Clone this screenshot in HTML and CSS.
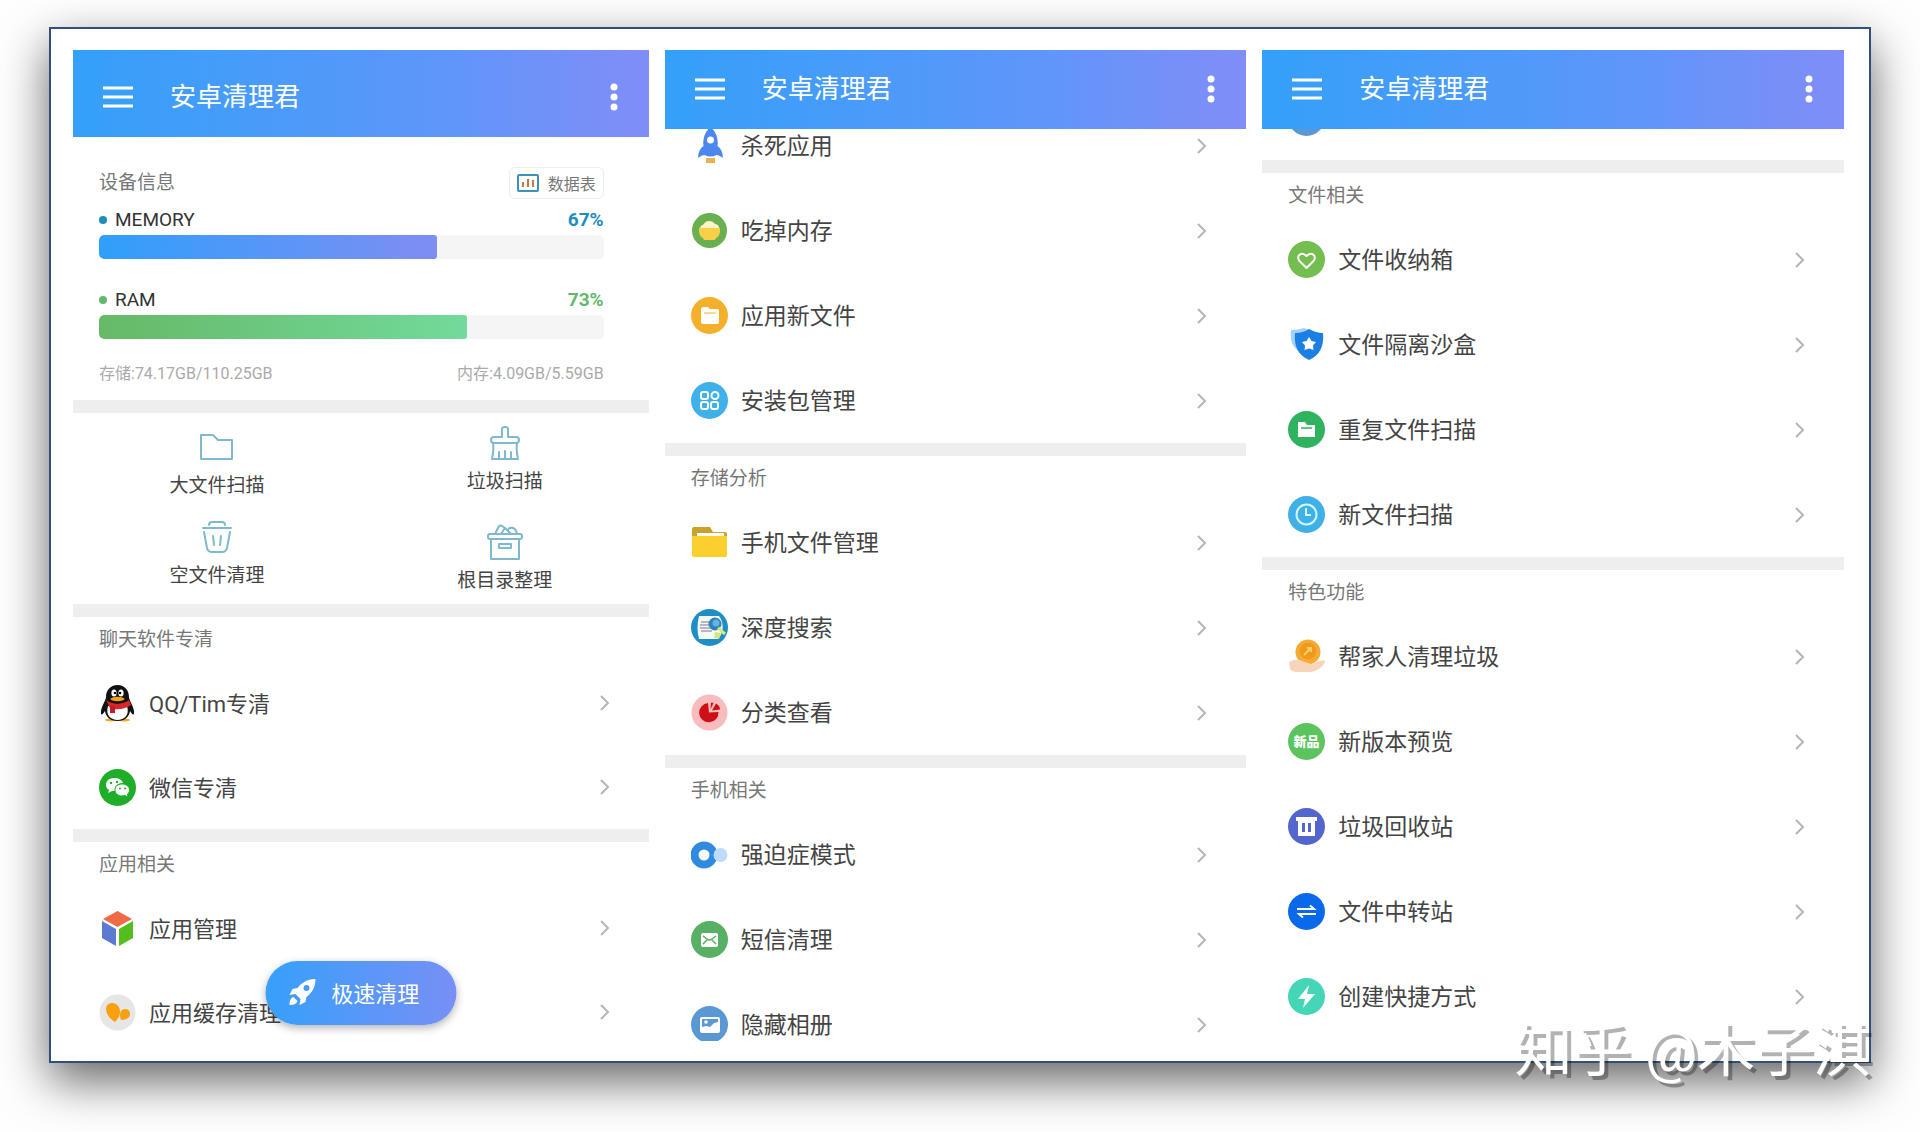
FILE: index.html
```html
<!DOCTYPE html>
<html lang="zh-CN">
  <head>
    <meta charset="UTF-8" />
    <meta name="viewport" content="width=device-width, initial-scale=1.0" />
    <title>安卓清理君</title>
    <link rel="stylesheet" href="styles.css">
  </head>
  <body>
    <main class="board">
      <!-- Home -->
      <section class="screen home">
        <header class="appbar">
          <button class="menu-btn" type="button" aria-label="菜单">
            <svg width="30" height="22" viewBox="0 0 30 22"><path d="M0 2h30M0 11h30M0 20h30" stroke="#fff" stroke-width="3" /></svg>
          </button>
          <h1>安卓清理君</h1>
          <button class="more-btn" type="button" aria-label="更多">
            <svg width="8" height="28" viewBox="0 0 8 28" fill="#fff"><circle cx="4" cy="4" r="3.5" /><circle cx="4" cy="14" r="3.5" /><circle cx="4" cy="24" r="3.5" /></svg>
          </button>
        </header>
        <div class="content">
          <div class="device">
            <div class="device-head">
              <h2>设备信息</h2>
              <button class="data-btn" type="button">
                <svg width="22" height="18" viewBox="0 0 22 18" fill="none"><rect x="1" y="1" width="20" height="16" rx="1" stroke="#3b93bd" stroke-width="2" /><path d="M6 8v5M11 5v8M16 6v7" stroke="#c9793f" stroke-width="2" /></svg>
                数据表
              </button>
            </div>
            <div class="meter memory">
              <div class="meter-label"><i class="dot"></i><span>MEMORY</span><b>67%</b></div>
              <div class="bar"><div class="fill" style="width: 67%"></div></div>
            </div>
            <div class="meter ram">
              <div class="meter-label"><i class="dot"></i><span>RAM</span><b>73%</b></div>
              <div class="bar"><div class="fill" style="width: 73%"></div></div>
            </div>
            <div class="usage"><span>存储:74.17GB/110.25GB</span><span>内存:4.09GB/5.59GB</span></div>
          </div>

          <div class="tools">
            <div class="tools-col">
              <a class="tool" href="#">
                <svg width="36" height="36" viewBox="0 0 36 36"><path d="M2 30V6h12l5 5h14v19z" /></svg>
                大文件扫描
              </a>
              <a class="tool" href="#">
                <svg width="36" height="36" viewBox="0 0 36 36"><path d="M10 6q0-3 3-3h10q3 0 3 3M4 9h28M5 13l3 16q1 4 5 4h10q4 0 5-4l3-16M14 17l1 9M22 17l-1 9" /></svg>
                空文件清理
              </a>
            </div>
            <div class="tools-col wide">
              <a class="tool" href="#">
                <svg width="36" height="36" viewBox="0 0 36 36"><path d="M15 12V4q0-2 3-2t3 2v8h8q3 0 3 3t-3 3H7q-3 0-3-3t3-3zM6 18q1 8-1 16h26q-2-8-1-16M12 34v-7M18 34v-8M24 34v-7" /></svg>
                垃圾扫描
              </a>
              <a class="tool" href="#">
                <svg width="36" height="36" viewBox="0 0 36 36"><path d="M3 10h30q2 0 2 2v1q0 2-2 2H3q-2 0-2-2v-1q0-2 2-2zM4 15v20h28V15M12 20h12v4H12zM8 10l4-8q1-1 3 0l3 2-4 6M18 4l6 6M21 6q1-3 5-2 3 1 4 6" /></svg>
                根目录整理
              </a>
            </div>
          </div>

          <section class="group">
            <h2>聊天软件专清</h2>
            <a class="row" href="#">
              <svg class="icon" viewBox="0 0 37 37"><ellipse cx="12" cy="35" rx="6" ry="1.500" fill="#f5a623" /><ellipse cx="25" cy="35" rx="6" ry="1.500" fill="#f5a623" /><path d="M18.500 0C11 0 7 6 7 12c0 3-4 8-5 14-.500 4 1 5 4 0 1 6 5 10 12.500 10S30 32 31 26c3 5 4.500 4 4 0-1-6-5-11-5-14 0-6-4-12-11.500-12z" fill="#111" /><path d="M9 21h19c3 9-3 14-9.500 14S6 30 9 21z" fill="#fff" /><path d="M7 15c7 5 16 5 23 0l2 5c-7 5-16 5-21 3z" fill="#d9252c" /><path d="M11 20l5 1v7h-5z" fill="#c41d25" /><ellipse cx="15" cy="8" rx="2.600" ry="3.500" fill="#fff" /><ellipse cx="22" cy="8" rx="2.600" ry="3.500" fill="#fff" /><circle cx="16" cy="8" r="1.300" /><circle cx="21" cy="8" r="1.300" /><ellipse cx="18.500" cy="14" rx="7" ry="2.200" fill="#f7a01d" /></svg>
              <span>QQ/Tim专清</span><svg class="arrow" viewBox="0 0 10 16"><path d="M1 1l7 7-7 7" /></svg>
            </a>
            <a class="row" href="#">
              <svg class="icon" viewBox="0 0 37 37"><circle cx="18.500" cy="18.500" r="18.500" fill="#1fae28" /><path d="M15 9c-5 0-8 3-8 7 0 2 1 4 3 5l-1 3 4-2h3c-1-5 3-8 8-8-1-3-4-5-9-5z" fill="#fff" /><path d="M23 15c-4 0-7 2.500-7 6s3 6 7 6l3-.500 3 1.500-.500-3c1.500-1 2-2.500 2-4 0-3.500-3.500-6-7.500-6z" fill="#fff" stroke="#1fae28" /><g fill="#1fae28"><circle cx="12" cy="14" r="1.200" /><circle cx="18" cy="13" r="1.200" /><circle cx="21" cy="19.500" r="1" /><circle cx="26" cy="19.500" r="1" /></g></svg>
              <span>微信专清</span><svg class="arrow" viewBox="0 0 10 16"><path d="M1 1l7 7-7 7" /></svg>
            </a>
          </section>

          <section class="group">
            <h2>应用相关</h2>
            <a class="row" href="#">
              <svg class="icon" viewBox="0 0 37 37"><path d="M18.500 1L33 9l-14.500 8L4 9z" fill="#ef6a45" /><path d="M3 11l14 8v17L3 28z" fill="#5d7ad2" /><path d="M34 11l-14 8v17l14-8z" fill="#56bd1f" /></svg>
              <span>应用管理</span><svg class="arrow" viewBox="0 0 10 16"><path d="M1 1l7 7-7 7" /></svg>
            </a>
            <a class="row" href="#">
              <svg class="icon" viewBox="0 0 37 37"><circle cx="18.500" cy="18.500" r="18" fill="#e7e6e6" /><path d="M16 28C11 25 7 20 7 15c0-4 3-6 6-6 5 0 8 4 8 9 0 4-2 7-5 10z" fill="#f8a010" /><path d="M22 26c-2-5-1-11 4-11 3 0 5 2 5 5 0 4-4 6-9 6z" fill="#f8a010" /></svg>
              <span>应用缓存清理</span><svg class="arrow" viewBox="0 0 10 16"><path d="M1 1l7 7-7 7" /></svg>
            </a>
          </section>
        </div>

        <button class="fab" type="button">
          <svg width="28" height="28" viewBox="0 0 28 28"><path fill="#fff" fill-rule="evenodd" d="M27 1C18 1 13 5 9 10L4 11 1 17l6-1 5 5-1 6 6-3 1-5c5-4 9-9 9-18zM18 7a3 3 0 1 1 0 6 3 3 0 0 1 0-6zM5 19l4 4c-1 3-4 4-8 4 0-4 1-7 4-8z" /></svg>
          极速清理
        </button>
      </section>

      <!-- Apps and storage -->
      <section class="screen">
        <header class="appbar">
          <button class="menu-btn" type="button" aria-label="菜单">
            <svg width="30" height="22" viewBox="0 0 30 22"><path d="M0 2h30M0 11h30M0 20h30" stroke="#fff" stroke-width="3" /></svg>
          </button>
          <h1>安卓清理君</h1>
          <button class="more-btn" type="button" aria-label="更多">
            <svg width="8" height="28" viewBox="0 0 8 28" fill="#fff"><circle cx="4" cy="4" r="3.500" /><circle cx="4" cy="14" r="3.500" /><circle cx="4" cy="24" r="3.500" /></svg>
          </button>
        </header>
        <div class="content">
          <div class="scrolled-apps">
            <section class="group">
              <a class="row" href="#">
                <svg class="icon" viewBox="0 0 37 37"><path d="M19.500 0c6 5 8 12 7 19 4 3 6 8 5 12-2-2-4-3-6-3-4 2-8 2-12 0-2 0-4 1-6 3-1-4 1-9 5-12-1-7 1-14 7-19z" fill="#4b88ee" /><circle cx="19.500" cy="13" r="3.500" fill="#fff" /><path d="M15 31h9v5h-9z" fill="#eab052" /></svg>
                <span>杀死应用</span><svg class="arrow" viewBox="0 0 10 16"><path d="M1 1l7 7-7 7" /></svg>
              </a>
              <a class="row" href="#">
                <svg class="icon" viewBox="0 0 37 37"><circle cx="18.500" cy="18.500" r="17.500" fill="#69b050" /><path d="M9 17c0-4 3-4 4-5 1-4 9-4 11 0 2 0 5 2 4 6z" fill="#fdf3c4" /><path d="M8 16h21v4q-1 5-4 6l-1 2H13l-1-2q-3-1-4-6z" fill="#f8cf48" /></svg>
                <span>吃掉内存</span><svg class="arrow" viewBox="0 0 10 16"><path d="M1 1l7 7-7 7" /></svg>
              </a>
              <a class="row" href="#">
                <svg class="icon" viewBox="0 0 37 37"><circle cx="18.500" cy="18.500" r="18.500" fill="#f4b02a" /><path d="M10 12q0-2 2-2h5l2 2h7q2 0 2 2v11q0 2-2 2H12q-2 0-2-2z" fill="#fff" /><path d="M13 16h12" stroke="#f4b02a" /></svg>
                <span>应用新文件</span><svg class="arrow" viewBox="0 0 10 16"><path d="M1 1l7 7-7 7" /></svg>
              </a>
              <a class="row" href="#">
                <svg class="icon" viewBox="0 0 37 37"><circle cx="18.500" cy="18.500" r="18.500" fill="#3fb1ea" /><g fill="none" stroke="#fff" stroke-width="2"><rect x="10" y="10" width="7" height="7" rx="2" /><circle cx="24" cy="13.500" r="3.500" /><rect x="10" y="20" width="7" height="7" rx="2" /><rect x="20" y="20" width="7" height="7" rx="2" /></g></svg>
                <span>安装包管理</span><svg class="arrow" viewBox="0 0 10 16"><path d="M1 1l7 7-7 7" /></svg>
              </a>
            </section>

            <section class="group">
              <h2>存储分析</h2>
              <a class="row" href="#">
                <svg class="icon" viewBox="0 0 37 37"><path d="M1 6q0-3 2-3h16l3 5h12q2 0 2 2v5H1z" fill="#c9a227" /><path d="M6 9h27v5H6z" fill="#fff" /><path d="M1 12h35v19q0 2-2 2H3q-2 0-2-2z" fill="#fbcf2e" /></svg>
                <span>手机文件管理</span><svg class="arrow" viewBox="0 0 10 16"><path d="M1 1l7 7-7 7" /></svg>
              </a>
              <a class="row" href="#">
                <svg class="icon" viewBox="0 0 37 37"><circle cx="18.500" cy="18.500" r="18.500" fill="#1d8fc6" /><path d="M8 7h20c5 6 5 17-1 23H8q-3-11 0-23z" fill="#f4faf0" /><path d="M10 13h9M9 16h9M9 19h10M10 22h11" stroke="#a59ec4" stroke-width="1.500" /><path d="M24 23l6 1-2 6-5-1z" fill="#d6e486" /><circle cx="24" cy="15" r="6.500" fill="#2a84bd" /><circle cx="25" cy="14" r="3.500" fill="#66b4dc" /><path d="M27 19l7 6" stroke="#dce978" stroke-width="3" /></svg>
                <span>深度搜索</span><svg class="arrow" viewBox="0 0 10 16"><path d="M1 1l7 7-7 7" /></svg>
              </a>
              <a class="row" href="#">
                <svg class="icon" viewBox="0 0 37 37"><circle cx="18.500" cy="18.500" r="18" fill="#f8bcbe" /><path d="M18 18.500L17 9a9.700 9.700 0 1 0 10.500 9z" fill="#ce0f16" /><path d="M19.500 15.500l.500-7 2.500.500z" fill="#ce0f16" /><path d="M21 16.500l4-7q4 2 4 6z" fill="#ce0f16" /></svg>
                <span>分类查看</span><svg class="arrow" viewBox="0 0 10 16"><path d="M1 1l7 7-7 7" /></svg>
              </a>
            </section>

            <section class="group">
              <h2>手机相关</h2>
              <a class="row" href="#">
                <svg class="icon" viewBox="0 0 37 37"><circle cx="13" cy="19" r="13.500" fill="#2f8be2" /><circle cx="13" cy="19" r="5.500" fill="#fff" /><circle cx="29.500" cy="19" r="7" fill="#bddcfb" /></svg>
                <span>强迫症模式</span><svg class="arrow" viewBox="0 0 10 16"><path d="M1 1l7 7-7 7" /></svg>
              </a>
              <a class="row" href="#">
                <svg class="icon" viewBox="0 0 37 37"><circle cx="18.500" cy="18.500" r="18.500" fill="#57b063" /><rect x="10" y="12" width="17" height="14" rx="2" fill="#fff" /><path d="M12 15l4 3q2.500 2 5 0l4-3M12 23l4-4M25 23l-4-4" fill="none" stroke="#57b063" stroke-width="1.500" /></svg>
                <span>短信清理</span><svg class="arrow" viewBox="0 0 10 16"><path d="M1 1l7 7-7 7" /></svg>
              </a>
              <a class="row" href="#">
                <svg class="icon" viewBox="0 0 37 37"><circle cx="18.500" cy="18.500" r="18.500" fill="#5a98d4" /><rect x="10" y="12" width="18" height="14" rx="1" fill="none" stroke="#fff" stroke-width="2" /><circle cx="15" cy="16" r="1.800" fill="#fff" /><path d="M11 21l4-1 4 1 4-4 4-1v10H11z" fill="#fff" /></svg>
                <span>隐藏相册</span><svg class="arrow" viewBox="0 0 10 16"><path d="M1 1l7 7-7 7" /></svg>
              </a>
            </section>
          </div>
        </div>
      </section>

      <!-- Files and extras -->
      <section class="screen">
        <header class="appbar">
          <button class="menu-btn" type="button" aria-label="菜单">
            <svg width="30" height="22" viewBox="0 0 30 22"><path d="M0 2h30M0 11h30M0 20h30" stroke="#fff" stroke-width="3" /></svg>
          </button>
          <h1>安卓清理君</h1>
          <button class="more-btn" type="button" aria-label="更多">
            <svg width="8" height="28" viewBox="0 0 8 28" fill="#fff"><circle cx="4" cy="4" r="3.500" /><circle cx="4" cy="14" r="3.500" /><circle cx="4" cy="24" r="3.500" /></svg>
          </button>
        </header>
        <div class="content">
          <div class="scrolled-files">
            <section class="group">
              <div class="row">
                <svg class="icon" viewBox="0 0 37 37"><circle cx="18.500" cy="18.500" r="18.500" fill="#5a98d4" /></svg>
              </div>
            </section>

            <section class="group">
              <h2>文件相关</h2>
              <a class="row" href="#">
                <svg class="icon" viewBox="0 0 37 37"><circle cx="18.500" cy="18.500" r="18.500" fill="#74be50" /><path d="M18.500 27l-7-7c-4-5 2-10 7-5 5-5 11 0 7 5z" fill="none" stroke="#fff" stroke-width="2" stroke-linejoin="round" /></svg>
                <span>文件收纳箱</span><svg class="arrow" viewBox="0 0 10 16"><path d="M1 1l7 7-7 7" /></svg>
              </a>
              <a class="row" href="#">
                <svg class="icon" viewBox="0 0 37 37"><path d="M3 4q7 0 13-2l13 5v19H12Q1 20 3 4z" fill="#a5d0f9" /><path d="M21 3q7 4 14 4 2 20-14 27Q5 27 7 7q8 0 14-4z" fill="#1b7fe3" /><path d="M21 11l2.500 4 4.500 1-3 3.500.500 4.500-4.500-1.500-4.500 1.500.500-4.500L14 16l4.500-1z" fill="#fff" /></svg>
                <span>文件隔离沙盒</span><svg class="arrow" viewBox="0 0 10 16"><path d="M1 1l7 7-7 7" /></svg>
              </a>
              <a class="row" href="#">
                <svg class="icon" viewBox="0 0 37 37"><circle cx="18.500" cy="18.500" r="18.500" fill="#2fb35f" /><path d="M10 11h7l2 3h8v12H10z" fill="#fff" /><path d="M13 17h11" stroke="#2fb35f" stroke-width="1.500" /></svg>
                <span>重复文件扫描</span><svg class="arrow" viewBox="0 0 10 16"><path d="M1 1l7 7-7 7" /></svg>
              </a>
              <a class="row" href="#">
                <svg class="icon" viewBox="0 0 37 37"><circle cx="18.500" cy="18.500" r="18.500" fill="#3fb0e8" /><circle cx="18.500" cy="18.500" r="10" fill="none" stroke="#d5f7ff" stroke-width="2" /><path d="M18 12v7h5" fill="none" stroke="#d5f7ff" stroke-width="2" /></svg>
                <span>新文件扫描</span><svg class="arrow" viewBox="0 0 10 16"><path d="M1 1l7 7-7 7" /></svg>
              </a>
            </section>

            <section class="group">
              <h2>特色功能</h2>
              <a class="row" href="#">
                <svg class="icon" viewBox="0 0 37 37"><circle cx="20" cy="14" r="12.500" fill="#f6ac32" /><circle cx="20" cy="13" r="8.500" fill="#f0991f" /><path d="M16 17l6-6M19 10h4v4" fill="none" stroke="#ffce62" stroke-width="2" /><path d="M1 24q7-4 13-1l9 3 9-3q5-2 5 1-4 8-14 10H8q-6-1-6-4z" fill="#f6d5bb" /></svg>
                <span>帮家人清理垃圾</span><svg class="arrow" viewBox="0 0 10 16"><path d="M1 1l7 7-7 7" /></svg>
              </a>
              <a class="row" href="#">
                <svg class="icon" viewBox="0 0 37 37"><circle cx="18.500" cy="18.500" r="18.500" fill="#5bc45f" /><text class="badge-text" x="18.500" y="23" text-anchor="middle">新品</text></svg>
                <span>新版本预览</span><svg class="arrow" viewBox="0 0 10 16"><path d="M1 1l7 7-7 7" /></svg>
              </a>
              <a class="row" href="#">
                <svg class="icon" viewBox="0 0 37 37"><circle cx="18.500" cy="18.500" r="18.500" fill="#5465ce" /><path d="M8 9h21v4h-2v15H10V13H8zM14 15v9h3v-9zM20 15v9h3v-9z" fill="#fff" fill-rule="evenodd" /></svg>
                <span>垃圾回收站</span><svg class="arrow" viewBox="0 0 10 16"><path d="M1 1l7 7-7 7" /></svg>
              </a>
              <a class="row" href="#">
                <svg class="icon" viewBox="0 0 37 37"><circle cx="18.500" cy="18.500" r="18.500" fill="#0a69ea" /><path d="M9 16h17l-4-3.500M28 21H11l4 3.500" fill="none" stroke="#fff" stroke-width="2" /></svg>
                <span>文件中转站</span><svg class="arrow" viewBox="0 0 10 16"><path d="M1 1l7 7-7 7" /></svg>
              </a>
              <a class="row" href="#">
                <svg class="icon" viewBox="0 0 37 37"><circle cx="18.500" cy="18.500" r="18.500" fill="#45d5b7" /><path d="M21 7L10 21h7l-2 9 12-14h-8z" fill="#fff" /></svg>
                <span>创建快捷方式</span><svg class="arrow" viewBox="0 0 10 16"><path d="M1 1l7 7-7 7" /></svg>
              </a>
            </section>
          </div>
        </div>
      </section>

      <p class="watermark">知乎 @木子淇</p>
    </main>
  </body>
</html>
```
FILE: styles.css
```css
* {
  margin: 0;
  padding: 0;
  box-sizing: border-box;
}

body {
  font-family: Roboto, "Noto Sans CJK SC", sans-serif;
  background: #fefefe;
  color: #444;
  padding: 27px 49px 69px;
  overflow: hidden;
}

a {
  color: inherit;
  text-decoration: none;
}

button {
  font-family: inherit;
  border: none;
  background: none;
  cursor: pointer;
}

svg {
  display: block;
  flex: none;
}

.board {
  position: relative;
  display: grid;
  grid-template-columns: 575fr 581fr 581fr;
  grid-template-rows: minmax(0, 1fr);
  gap: 16px;
  height: calc(100vh - 96px);
  padding: 21px 25px 20px 22px;
  background: #fff;
  border: 2px solid #304f7c;
  box-shadow: 0 18px 44px rgba(0, 0, 0, 0.6);
}

.screen {
  position: relative;
  display: flex;
  flex-direction: column;
  min-width: 0;
  overflow: hidden;
}

.appbar {
  display: flex;
  align-items: center;
  flex: none;
  height: 79px;
  padding: 0 31px 2px 30px;
  background: linear-gradient(90deg, #34a0f9, #5b97f9 60%, #818df8);
  color: #fff;
}

.home .appbar {
  height: 87px;
  padding-top: 8px;
}

.appbar h1 {
  flex: 1;
  margin-left: 37px;
  font-size: 26px;
  line-height: 36px;
  font-weight: 400;
}

.content {
  flex: 1;
  min-height: 0;
  overflow: hidden;
}

/* lists that are already scrolled under the app bar */
.scrolled-apps {
  margin-top: -26px;
}

.scrolled-files {
  margin-top: -54px;
}

h2 {
  font-size: 19px;
  line-height: 28px;
  font-weight: 400;
  color: #777;
}

/* device info */
.device {
  padding: 30px 45px 14px 26px;
}

.device-head {
  display: flex;
  align-items: center;
  justify-content: space-between;
}

.data-btn {
  display: flex;
  align-items: center;
  gap: 9px;
  height: 32px;
  padding: 0 7px;
  border: 1px solid #ececec;
  border-radius: 6px;
  font-size: 16px;
  color: #777;
}

.meter {
  padding-top: 8px;
}

.ram {
  padding-top: 28px;
}

.meter-label {
  display: flex;
  align-items: center;
  height: 28px;
  padding-bottom: 3px;
  font-size: 19px;
  color: #333;
}

.meter-label b {
  margin-left: auto;
  font-weight: 700;
}

.dot {
  width: 8px;
  height: 8px;
  margin-right: 8px;
  border-radius: 50%;
}

.bar {
  height: 24px;
  border-radius: 5px;
  background: #f5f5f5;
  overflow: hidden;
}

.fill {
  height: 100%;
  border-radius: 5px 3px 3px 5px;
}

.memory .dot {
  background: #1c8dbd;
}

.memory b {
  color: #1c8dbd;
}

.memory .fill {
  background: linear-gradient(90deg, #2f9ffb, #808df3);
}

.ram .dot {
  background: #62b96b;
}

.ram b {
  color: #62b96b;
}

.ram .fill {
  background: linear-gradient(90deg, #66b967, #72da9b);
}

.usage {
  display: flex;
  justify-content: space-between;
  padding-top: 23px;
  font-size: 16px;
  line-height: 24px;
  color: #aaa;
}

/* quick tools */
.tools {
  display: grid;
  grid-template-columns: 1fr 1fr;
  height: 204px;
  padding-top: 2px;
  border-top: 13px solid #eee;
}

.tools-col {
  display: flex;
  flex-direction: column;
  justify-content: center;
  gap: 19px;
}

.tool {
  display: flex;
  flex-direction: column;
  align-items: center;
  gap: 7px;
  font-size: 19px;
  line-height: 28px;
}

.tools-col.wide {
  gap: 28px;
}

.tool svg {
  fill: none;
  stroke: #7fb9cd;
  stroke-width: 2;
  stroke-linejoin: round;
  stroke-linecap: round;
}

/* menu groups */
.group + .group,
.tools + .group {
  border-top: 13px solid #eee;
}

.group h2 {
  padding: 9px 26px 7px;
}

.row {
  display: flex;
  align-items: center;
  height: 85px;
  padding: 0 39px 0 26px;
  font-size: 23px;
}

.home .row {
  height: 84px;
  font-size: 22px;
}

.row span {
  flex: 1;
  margin-left: 13px;
  padding-bottom: 3px;
  white-space: nowrap;
}

.icon {
  width: 37px;
  height: 37px;
}

.badge-text {
  font-size: 13px;
  font-weight: 900;
  fill: #fff;
}

.arrow {
  width: 10px;
  height: 16px;
  fill: none;
  stroke: #b5b5b5;
  stroke-width: 2;
}

.fab {
  position: absolute;
  left: 50%;
  bottom: 16px;
  transform: translateX(-50%);
  display: flex;
  align-items: center;
  gap: 15px;
  height: 64px;
  padding: 0 37px 2px 23px;
  border-radius: 32px;
  background: linear-gradient(90deg, #36a0fa, #788ff6);
  box-shadow: 0 3px 8px rgba(0, 0, 0, 0.3);
  color: #fff;
  font-size: 22px;
  white-space: nowrap;
}

.watermark {
  position: absolute;
  right: -2px;
  bottom: -30px;
  color: #fff;
  font-size: 58px;
  line-height: 80px;
  text-shadow: 4px 4px 0 rgba(0, 0, 0, 0.3);
  white-space: nowrap;
}
```
